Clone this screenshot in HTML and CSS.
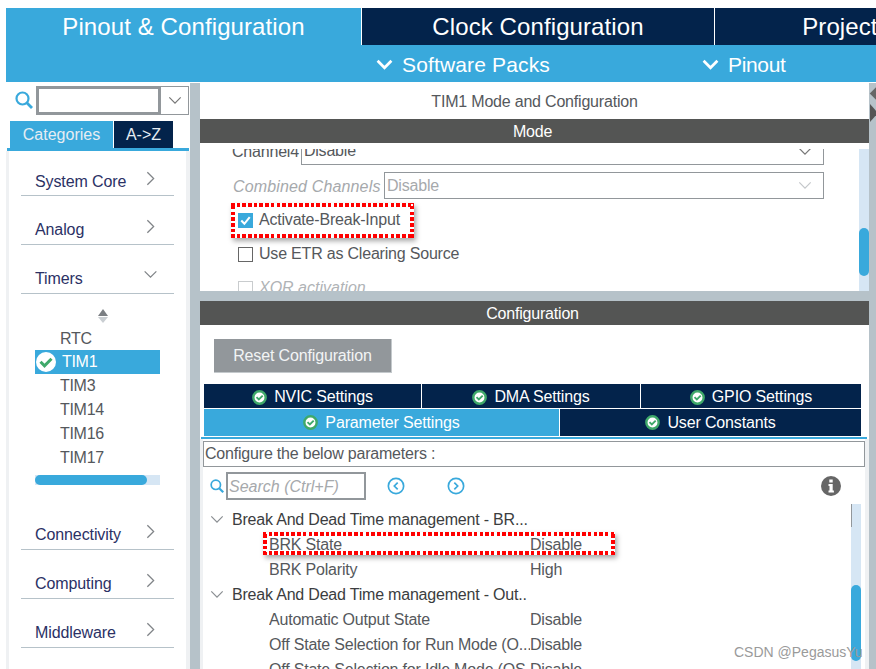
FILE: index.html
```html
<!DOCTYPE html>
<html lang="en">
<head>
<meta charset="utf-8">
<title>TIM1 Mode and Configuration</title>
<link rel="stylesheet" href="styles.css">
</head>
<body>
<svg class="sprite" aria-hidden="true">
  <symbol id="ok" viewBox="0 0 16 16"><circle cx="8" cy="8" r="6.600" fill="#fff" stroke="#3fa96a" stroke-width="2.600"/><path d="M4.800 7.600 7.300 10.100 11.400 6" fill="none" stroke="#3fa96a" stroke-width="2"/></symbol>
  <symbol id="down" viewBox="0 0 16 10"><path d="M1.500 1.500 8 8 14.500 1.500" fill="none" stroke="currentColor" stroke-width="1.400"/></symbol>
  <symbol id="downb" viewBox="0 0 16 10"><path d="M1.500 1.500 8 8 14.500 1.500" fill="none" stroke="currentColor" stroke-width="2.600"/></symbol>
  <symbol id="right" viewBox="0 0 10 16"><path d="M1.500 1 8.500 8 1.500 15" fill="none" stroke="currentColor" stroke-width="1.400"/></symbol>
  <symbol id="mag" viewBox="0 0 18 18"><circle cx="7.500" cy="7.500" r="6" fill="none" stroke="#39a9dc" stroke-width="2.200"/><path d="M11.800 11.800 17 17" stroke="#39a9dc" stroke-width="2.800"/></symbol>
</svg>
<div class="app">
  <nav class="tabs">
    <div class="tab tab-on">Pinout &amp; Configuration</div>
    <div class="tab">Clock Configuration</div>
    <div class="tab">Project Manager</div>
  </nav>
  <div class="subbar">
    <div class="subitem"><svg class="subchev"><use href="#downb"/></svg>Software Packs</div>
    <div class="subitem"><svg class="subchev"><use href="#downb"/></svg>Pinout</div>
  </div>
  <div class="main">
    <aside class="side">
      <div class="side-search">
        <svg class="side-mag"><use href="#mag"/></svg>
        <div class="side-input"></div>
        <div class="side-combo"><svg class="chev-s"><use href="#down"/></svg></div>
      </div>
      <div class="side-tabs">
        <div class="stab stab-on">Categories</div>
        <div class="stab">A-&gt;Z</div>
      </div>
      <div class="side-line"></div>
      <div class="side-body">
        <div class="cat"><span>System Core</span><svg class="cat-r"><use href="#right"/></svg></div>
        <div class="cat"><span>Analog</span><svg class="cat-r"><use href="#right"/></svg></div>
        <div class="cat"><span>Timers</span><svg class="cat-d"><use href="#down"/></svg></div>
        <div class="timers">
          <div class="sort"><span class="sort-up"></span><span class="sort-down"></span></div>
          <div class="tim">RTC</div>
          <div class="tim tim-on"><svg class="tim-ok" viewBox="0 0 20 20"><circle cx="10" cy="10" r="10" fill="#fff"/><path d="M4.500 9.800 8.500 13.800 15.500 6.800" fill="none" stroke="#3fa96a" stroke-width="3"/></svg>TIM1</div>
          <div class="tim">TIM3</div>
          <div class="tim">TIM14</div>
          <div class="tim">TIM16</div>
          <div class="tim">TIM17</div>
          <div class="hscroll"><div class="hthumb"></div></div>
        </div>
        <div class="cat"><span>Connectivity</span><svg class="cat-r"><use href="#right"/></svg></div>
        <div class="cat"><span>Computing</span><svg class="cat-r"><use href="#right"/></svg></div>
        <div class="cat"><span>Middleware</span><svg class="cat-r"><use href="#right"/></svg></div>
      </div>
    </aside>
    <div class="split-v"></div>
    <section class="center">
      <div class="title">TIM1 Mode and Configuration</div>
      <div class="bar">Mode</div>
      <div class="mode">
        <div class="mode-view">
          <div class="mode-inner">
            <div class="field">
              <span class="flabel">Channel4</span>
              <div class="select sel-first"><span>Disable</span><svg class="chev-s"><use href="#down"/></svg></div>
            </div>
            <div class="field field-off">
              <span class="flabel flabel-i">Combined Channels</span>
              <div class="select sel-off"><span>Disable</span><svg class="chev-s"><use href="#down"/></svg></div>
            </div>
            <label class="check"><span class="box box-on"><svg viewBox="0 0 16 16"><path d="M3.500 8 6.800 11.500 12.500 4.500" fill="none" stroke="#fff" stroke-width="2.200"/></svg></span>Activate-Break-Input</label>
            <label class="check"><span class="box"></span>Use ETR as Clearing Source</label>
            <label class="check check-off"><span class="box box-off"></span>XOR activation</label>
          </div>
        </div>
        <div class="vtrack vtrack-mode"><div class="vthumb"></div></div>
      </div>
      <div class="split-h"></div>
      <div class="bar">Configuration</div>
      <div class="reset-row"><div class="reset">Reset Configuration</div></div>
      <div class="ctabs ctabs-3">
        <div class="ctab"><svg class="ok"><use href="#ok"/></svg>NVIC Settings</div>
        <div class="ctab"><svg class="ok"><use href="#ok"/></svg>DMA Settings</div>
        <div class="ctab"><svg class="ok"><use href="#ok"/></svg>GPIO Settings</div>
      </div>
      <div class="ctabs ctabs-2">
        <div class="ctab ctab-on"><svg class="ok"><use href="#ok"/></svg>Parameter Settings</div>
        <div class="ctab"><svg class="ok"><use href="#ok"/></svg>User Constants</div>
      </div>
      <div class="cline"></div>
      <div class="cbody">
        <div class="cinner">
          <div class="hint">Configure the below parameters :</div>
          <div class="tools">
            <svg class="tool-mag"><use href="#mag"/></svg>
            <div class="search">Search (Ctrl+F)</div>
            <svg class="nav nav-a" viewBox="0 0 16 16"><circle cx="8" cy="8" r="6.800" fill="none" stroke="#39a9dc" stroke-width="1.500"/><path d="M9.500 5 6.500 8 9.500 11" fill="none" stroke="#39a9dc" stroke-width="1.500"/></svg>
            <svg class="nav nav-b" viewBox="0 0 16 16"><circle cx="8" cy="8" r="6.800" fill="none" stroke="#39a9dc" stroke-width="1.500"/><path d="M6.500 5 9.500 8 6.500 11" fill="none" stroke="#39a9dc" stroke-width="1.500"/></svg>
            <svg class="info" viewBox="0 0 20 20"><circle cx="10" cy="10" r="10" fill="#666"/><rect x="8.300" y="3.500" width="3.400" height="3" fill="#fff"/><path d="M7.500 8h4.200v6.500h1.200v2H7.500v-2h1V10h-1z" fill="#fff"/></svg>
          </div>
          <div class="tree-wrap">
            <div class="tree">
              <div class="node"><svg class="node-chev"><use href="#down"/></svg>Break And Dead Time management - BR...</div>
              <div class="leaf"><span class="leaf-k">BRK State</span><span>Disable</span></div>
              <div class="leaf"><span class="leaf-k">BRK Polarity</span><span>High</span></div>
              <div class="node"><svg class="node-chev"><use href="#down"/></svg>Break And Dead Time management - Out..</div>
              <div class="leaf"><span class="leaf-k">Automatic Output State</span><span>Disable</span></div>
              <div class="leaf"><span class="leaf-k">Off State Selection for Run Mode (O...</span><span>Disable</span></div>
              <div class="leaf"><span class="leaf-k">Off State Selection for Idle Mode (OS</span><span>Disable</span></div>
            </div>
            <div class="vtrack vtrack-tree"><div class="vthumb"></div></div>
          </div>
        </div>
      </div>
    </section>
    <div class="split-r">
      <span class="grip grip-a"></span>
      <span class="grip grip-b"></span>
    </div>
  </div>
</div>
<div class="mark mark-a"></div>
<div class="mark mark-b"></div>
<div class="watermark">CSDN @PegasusYu</div>
</body>
</html>
```

FILE: styles.css
```css
* { box-sizing: border-box; }
html, body { margin: 0; height: 100%; overflow: hidden; background: #fff; }
body { font-family: "Liberation Sans", Arial, sans-serif; font-size: 16px; letter-spacing: -0.2px; color: #55585c; position: relative; }
.sprite { display: none; }
.app { width: 876px; height: 669px; padding: 8px 0 0 6px; display: flex; flex-direction: column; overflow: hidden; }

.tabs { display: flex; height: 37px; gap: 1px; flex: none; }
.tab { width: 352px; flex: none; background: #03234b; color: #fff; font-size: 24px; letter-spacing: 0.1px; display: flex; align-items: center; justify-content: center; white-space: nowrap; overflow: hidden; }
.tab:first-child { width: 355px; }
.tab-on { background: #39a9dc; }
.subbar { height: 37px; flex: none; background: #39a9dc; color: #fff; font-size: 21px; letter-spacing: 0.15px; display: flex; align-items: center; padding: 2px 0 0 370px; gap: 152px; }
.subitem { display: flex; align-items: center; gap: 9px; }
.subitem + .subitem { letter-spacing: -0.35px; }
.subchev { width: 17px; height: 11px; }

.main { flex: 1; min-height: 0; display: grid; grid-template-columns: 184px 10px 669px 7px; padding-top: 1px; }

.side { display: flex; flex-direction: column; min-height: 0; }
.side-search { height: 31px; padding: 3px 0 0 9px; display: flex; flex: none; }
.side-mag { width: 18px; height: 18px; margin: 5px 3px 0 0; }
.side-input { width: 125px; height: 29px; border: 3px solid #92979b; }
.side-combo { width: 28px; height: 29px; border: 1.500px solid #92979b; border-left: 0; display: flex; align-items: center; justify-content: center; color: #777; }
.chev-s { width: 14px; height: 9px; }
.side-tabs { height: 27px; margin: 7px 0 0 4px; display: flex; gap: 1px; flex: none; letter-spacing: 0; }
.stab { width: 59px; background: #03234b; color: #e6edf3; display: flex; align-items: center; justify-content: center; }
.stab-on { width: 103px; background: #39a9dc; }
.side-line { height: 3px; flex: none; margin: 0 1px; background: #39a9dc; }
.side-body { flex: 1; background: #fff; border: solid #eff1f3; border-width: 0 4px 0 3px; }
.cat { height: 49px; margin: 0 12px; border-bottom: 1.500px solid #b6c2c9; padding: 0 19px 5px 14px; display: flex; align-items: flex-end; justify-content: space-between; color: #2b3165; line-height: 18px; letter-spacing: -0.1px; }
.side-body .cat:first-child { height: 45px; padding-bottom: 4px; }
.cat-r { width: 9px; height: 15px; color: #808488; margin-bottom: 5px; }
.cat-d { width: 15px; height: 9px; color: #808488; margin: 0 -3px 9px 0; }
.timers { height: 207px; margin-left: 26px; padding-top: 15px; }
.sort { width: 136px; height: 17px; display: flex; flex-direction: column; align-items: center; gap: 1px; }
.sort-up { border: solid transparent; border-width: 0 5px 7px; border-bottom-color: #7b7f83; }
.sort-down { border: solid transparent; border-width: 6px 5px 0; border-top-color: #c9ced2; }
.tim { width: 125px; height: 23.800px; display: flex; align-items: center; padding: 2px 0 0 25px; color: #55585c; letter-spacing: -0.3px; }
.tim-on { background: #39a9dc; color: #fff; padding: 0 0 0 1px; gap: 6px; }
.tim-ok { width: 20px; height: 20px; }
.hscroll { width: 125px; height: 10px; margin-top: 6px; background: #d6e6f4; }
.hthumb { width: 112px; height: 10px; border-radius: 5px; background: #39a9dc; }

.split-v { background: #b6c2c9; }
.split-r { background: #b6c2c9; position: relative; overflow: hidden; }
.grip { position: absolute; }
.grip-a { top: 5px; left: 3px; width: 11px; height: 11px; background: #666; transform: rotate(45deg); }
.grip-b { top: 21px; left: 1px; border: solid transparent; border-width: 9px 0 9px 8px; border-left-color: #555; }

.center { display: flex; flex-direction: column; min-height: 0; overflow: hidden; }
.title { height: 36px; flex: none; display: flex; align-items: center; justify-content: center; padding: 2px 0 0 0; }
.bar { height: 24px; flex: none; background: #545554; color: #fff; display: flex; align-items: center; justify-content: center; padding: 2px 4px 0 0; }

.mode { height: 148px; flex: none; padding-top: 6px; display: flex; }
.mode-view { flex: 1; overflow: hidden; }
.mode-inner { margin-top: -11px; padding-left: 32px; }
.field { display: flex; align-items: center; height: 27px; padding-top: 1px; }
.field-off { margin-top: 7px; }
.flabel { white-space: nowrap; }
.flabel-i { width: 152px; padding: 1px 0 0 1px; font-style: italic; color: #a6a9ac; letter-spacing: 0.15px; }
.select { flex: none; display: flex; justify-content: space-between; align-items: center; height: 27px; border: 1.500px solid #92979b; padding: 0 11px 0 2px; margin-top: -1px; }
.sel-first { width: 523px; margin-left: 2px; border-top: 0; border-right-width: 1px; }
.sel-off { width: 440px; color: #a6a9ac; }
.sel-off .chev-s { color: #c4c7ca; }
.sel-first .chev-s { color: #777; }
.check { display: flex; align-items: center; height: 34px; padding-left: 6px; gap: 6px; }
.field-off + .check { margin-top: 4px; }
.box { width: 15px; height: 15px; border: 1.500px solid #666; flex: none; }
.box svg { display: block; width: 15px; height: 15px; }
.box-on { background: #39a9dc; border: 0; }
.box-off { border-color: #c9ccce; }
.check-off { color: #b0b3b6; font-style: italic; letter-spacing: 0; }
.vtrack { flex: none; width: 10px; background: #d6e6f4; position: relative; }
.vthumb { position: absolute; left: 0; width: 10px; background: #39a9dc; border-radius: 5px; }
.vtrack-mode .vthumb { top: 79px; height: 48px; }
.vtrack-tree { margin-right: 4px; }
.vtrack-tree::before { content: ""; position: absolute; left: 0; top: 0; width: 1px; height: 23px; background: #92979b; }
.vtrack-tree .vthumb { top: 81px; height: 76px; }

.split-h { height: 10px; flex: none; background: #b6c2c9; }
.reset-row { height: 59px; flex: none; padding: 14px 0 0 14px; }
.reset { width: 178px; height: 34px; background: #92979b; border: solid #c4c9cc; border-width: 0 1px 1px 0; color: #f2f4f5; display: flex; align-items: center; justify-content: center; padding-top: 1px; letter-spacing: -0.15px; }
.ctabs { margin-left: 4px; width: 657px; display: grid; gap: 1px; flex: none; }
.ctabs-3 { height: 24px; grid-template-columns: 217px 218px 220px; }
.ctabs-3 .ctab { padding-top: 2px; }
.ctabs-2 { height: 27px; margin-top: 1px; grid-template-columns: 355px 301px; }
.ctab { background: #03234b; color: #fff; display: flex; align-items: center; justify-content: center; gap: 7px; white-space: nowrap; letter-spacing: -0.15px; }
.ctab-on { background: #39a9dc; }
.ok { width: 15px; height: 15px; }
.cline { height: 2px; flex: none; background: #39a9dc; margin: 1px 2px 0 1px; }
.cbody { flex: 1; min-height: 0; background: #eff1f3; padding: 0 4px 0 3px; }
.cinner { height: 100%; background: #fff; padding-top: 2px; display: flex; flex-direction: column; }
.hint { height: 26px; flex: none; border: 1px solid #92979b; display: flex; align-items: center; padding-left: 1px; }
.tools { height: 37px; flex: none; display: flex; align-items: center; padding: 1px 0 0 7px; }
.tool-mag { width: 14px; height: 14px; }
.search { width: 140px; height: 28px; margin-left: 2px; border: 2px solid #92979b; font-style: italic; color: #a6a9ac; letter-spacing: 0; display: flex; align-items: center; padding: 1px 0 0 1px; }
.nav { width: 18px; height: 18px; }
.nav-a { margin-left: 21px; }
.nav-b { margin-left: 42px; }
.info { width: 20px; height: 20px; margin-left: 356px; }
.tree-wrap { flex: 1; min-height: 0; display: flex; justify-content: space-between; }
.tree { width: 648px; padding-top: 3px; overflow: hidden; }
.node { height: 25px; display: flex; align-items: center; gap: 8px; padding-left: 7px; color: #3b3d40; white-space: nowrap; }
.node-chev { width: 14px; height: 9px; color: #8a8e92; }
.leaf { height: 25px; display: flex; align-items: center; padding-left: 66px; white-space: nowrap; }
.leaf-k { width: 261px; flex: none; overflow: hidden; }

.mark { position: absolute; box-shadow: 2px 3px 5px rgba(0,0,0,.35);
  background:
    repeating-linear-gradient(90deg, #f00 0 3.500px, transparent 3.500px 5.700px) left top / 100% 4px no-repeat,
    repeating-linear-gradient(90deg, #f00 0 3.500px, transparent 3.500px 5.700px) left bottom / 100% 4px no-repeat,
    repeating-linear-gradient(0deg, #f00 0 3.500px, transparent 3.500px 5.700px) left top / 4px 100% no-repeat,
    repeating-linear-gradient(0deg, #f00 0 3.500px, transparent 3.500px 5.700px) right top / 4px 100% no-repeat;
}
.mark-a { left: 231px; top: 203px; width: 183px; height: 35px; }
.mark-b { left: 263px; top: 532px; width: 352px; height: 23px; }
.watermark { position: absolute; left: 734px; top: 644px; font-size: 14px; letter-spacing: 0; color: #9a9a9a; white-space: nowrap; }
```
